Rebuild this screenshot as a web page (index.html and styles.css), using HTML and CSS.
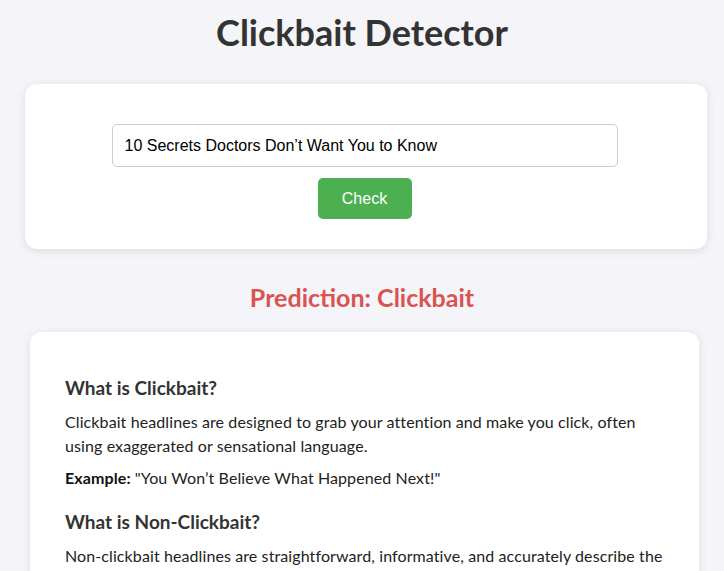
FILE: index.html
```html
<!DOCTYPE html>
<html lang="en">
<head>
<meta charset="utf-8">
<title>Clickbait Detector</title>
<link rel="stylesheet" href="styles.css">
</head>
<body>
<h1 class="title">Clickbait Detector</h1>
<form class="card check-card">
  <input class="headline" type="text" value="10 Secrets Doctors Don’t Want You to Know">
  <button class="check-btn" type="button">Check</button>
</form>
<h2 class="prediction">Prediction: Clickbait</h2>
<section class="card info-card">
  <h3 class="info-heading">What is Clickbait?</h3>
  <p class="info-text">Clickbait headlines are designed to grab your attention and make you click, often using exaggerated or sensational language.</p>
  <p class="info-text"><strong>Example:</strong> "You Won’t Believe What Happened Next!"</p>
  <h3 class="info-heading">What is Non-Clickbait?</h3>
  <p class="info-text">Non-clickbait headlines are straightforward, informative, and accurately describe the content of the article without exaggeration.</p>
  <p class="info-text"><strong>Example:</strong> "Scientists Discover New Species of Frog in the Amazon"</p>
</section>
</body>
</html>
```
FILE: styles.css
```css
html, body {
  margin: 0;
  padding: 0;
}
body {
  background: #f4f4f9;
  font-family: Lato, "Noto Sans", sans-serif;
  color: #333;
  padding: 1px 0 40px;
}
.title {
  margin: 7px 0 0;
  text-align: center;
  font-size: 36px;
  line-height: 48px;
  font-weight: 700;
  color: #333;
}
.card {
  background: #fff;
  border-radius: 12px;
  box-shadow: 0 2px 10px rgba(0, 0, 0, 0.1);
}
.check-card {
  width: 682px;
  box-sizing: border-box;
  margin: 28px 0 0 25px;
  padding: 40px 3px 30px 0;
  display: flex;
  flex-direction: column;
  align-items: center;
  gap: 11px;
}
.headline {
  width: 506px;
  height: 43px;
  box-sizing: border-box;
  border: 1px solid #ccc;
  border-radius: 5px;
  padding: 0 12px;
  font-family: "Liberation Sans", Arial, sans-serif;
  font-size: 16px;
  color: #000;
}
.check-btn {
  width: 94px;
  height: 41px;
  border: none;
  border-radius: 5px;
  background: #4caf50;
  color: #fff;
  font-family: "Liberation Sans", Arial, sans-serif;
  font-size: 16px;
}
.prediction {
  margin: 32px 0 0;
  text-align: center;
  font-size: 25px;
  line-height: 32px;
  font-weight: 700;
  color: #d9534f;
}
.info-card {
  width: 669px;
  box-sizing: border-box;
  margin: 19px 0 0 30px;
  padding: 44px 35px 30px;
}
.info-heading {
  margin: 0 0 10px;
  font-size: 19px;
  line-height: 24px;
  font-weight: 700;
  color: #333;
}
.info-text {
  margin: 0 0 8px;
  font-size: 16px;
  line-height: 24px;
  letter-spacing: 0.1px;
  color: #222;
}
.info-text + .info-heading {
  margin-top: 20px;
}
.info-text strong {
  font-weight: 700;
  color: #111;
}
```
